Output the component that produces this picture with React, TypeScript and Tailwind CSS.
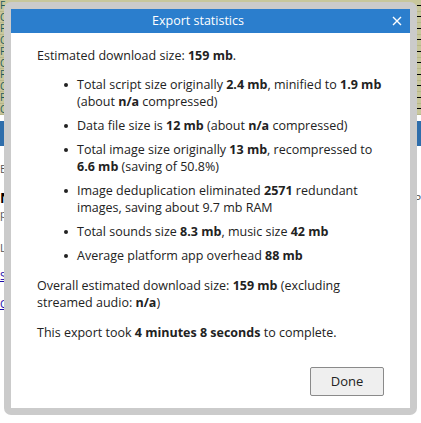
const font = { fontFamily: '"Open Sans", "Noto Sans", Arial, sans-serif' };

function Bullet({ children }: { children: React.ReactNode }) {
  return (
    <li className="flex gap-[9px]">
      <span className="mt-[7px] h-[4px] w-[4px] shrink-0 rounded-full bg-[#222]" />
      <span>{children}</span>
    </li>
  );
}

function Background() {
  return (
    <div className="flex h-full flex-col">
      <div className="flex h-[115px] flex-col bg-[#c8c79c]">
        {["F", "C", "F", "C", "F", "C", "F", "C", "F", "C"].map((c, i) => (
          <div
            key={i}
            className="flex h-[11.5px] items-center justify-between border-b border-[#b7b68a] text-[10px] leading-none text-[#1d5b5b]"
          >
            <span>{c}</span>
            <span className="h-px w-[4px] bg-black" />
          </div>
        ))}
      </div>
      <div className="mt-[6px] h-[25px] bg-[#2f6eab]" />
      <div className="flex flex-1 justify-between bg-white text-[11px] leading-[15px] text-[#555]">
        <div className="flex flex-col pt-[15px]">
          <span>Ex</span>
          <span className="mt-[14px] text-[14px] leading-[16px] font-bold text-black">N</span>
          <span>pl</span>
          <span className="mt-[19px]">Le</span>
          <span className="mt-[13px] text-[#1a0dab] underline">Si</span>
          <span className="mt-[13px] text-[#1a0dab] underline">O</span>
        </div>
        <div className="pt-[45px]">
          <span>P</span>
        </div>
      </div>
    </div>
  );
}

export default function App() {
  return (
    <div className="relative h-[423px] w-[421px] overflow-hidden bg-white" style={font}>
      <Background />
      <div className="absolute left-[4px] top-[2px] h-[413px] w-[413px] rounded-[7px] bg-[#cbcbcb] p-[7px]">
        <div className="flex h-full flex-col bg-white">
          <div className="flex h-[24px] items-center bg-[#2b7ecd] text-white">
            <span className="flex-1 text-center text-[12.5px]">Export statistics</span>
            <span className="flex w-[25px] items-center justify-center pr-[1px]">
              <svg width="10" height="10" viewBox="0 0 10 10" stroke="white" strokeWidth="1.4">
                <path d="M1 1 L9 9 M9 1 L1 9" />
              </svg>
            </span>
          </div>
          <div className="flex flex-1 flex-col px-[26px] pt-[14px] text-[12.5px] leading-[17px] text-[#222]">
            <p>
              Estimated download size: <b>159 mb</b>.
            </p>
            <ul className="mt-[12px] flex flex-col gap-[7px] pl-[27px]">
              <Bullet>
                Total script size originally <b>2.4 mb</b>, minified to <b>1.9 mb</b> (about <b>n/a</b> compressed)
              </Bullet>
              <Bullet>
                Data file size is <b>12 mb</b> (about <b>n/a</b> compressed)
              </Bullet>
              <Bullet>
                Total image size originally <b>13 mb</b>, recompressed to <b>6.6 mb</b> (saving of 50.8%)
              </Bullet>
              <Bullet>
                Image deduplication eliminated <b>2571</b> redundant images, saving about 9.7 mb RAM
              </Bullet>
              <Bullet>
                Total sounds size <b>8.3 mb</b>, music size <b>42 mb</b>
              </Bullet>
              <Bullet>
                Average platform app overhead <b>88 mb</b>
              </Bullet>
            </ul>
            <p className="mt-[13px]">
              Overall estimated download size: <b>159 mb</b> (excluding streamed audio: <b>n/a</b>)
            </p>
            <p className="mt-[13px]">
              This export took <b>4 minutes 8 seconds</b> to complete.
            </p>
            <div className="mt-auto flex justify-end pb-[12px]">
              <button className="h-[29px] w-[74px] rounded-[2px] border border-[#8a8a8a] bg-[#efefef] text-[13px] text-[#222]">
                Done
              </button>
            </div>
          </div>
        </div>
      </div>
    </div>
  );
}
